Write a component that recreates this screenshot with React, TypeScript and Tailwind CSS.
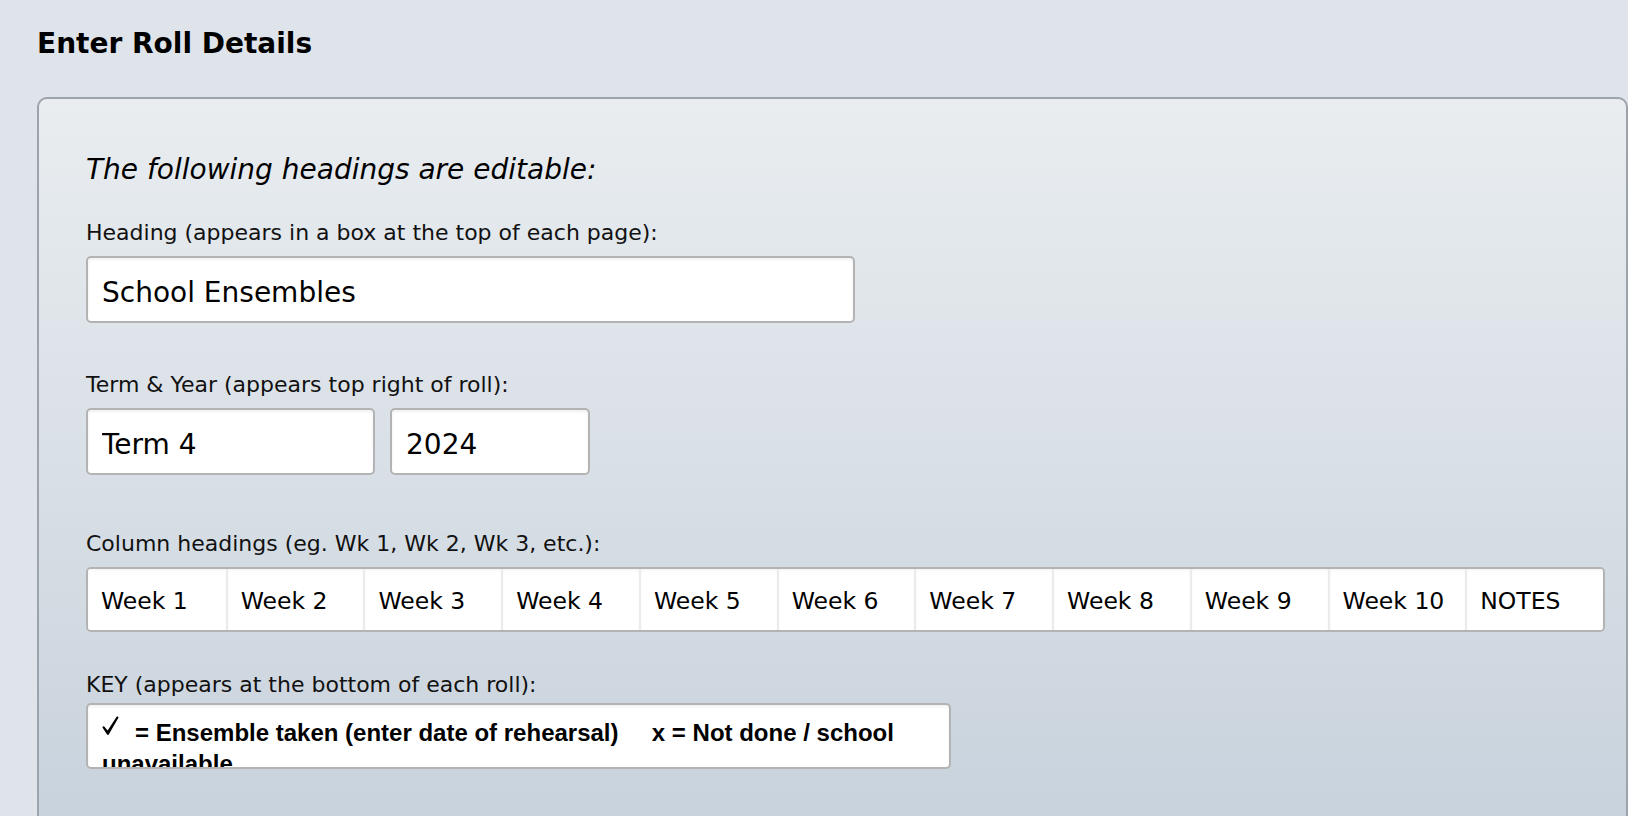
import { useState } from "react";

const weeks = [
  "Week 1",
  "Week 2",
  "Week 3",
  "Week 4",
  "Week 5",
  "Week 6",
  "Week 7",
  "Week 8",
  "Week 9",
  "Week 10",
  "NOTES",
];

const inputClass =
  "h-[67px] rounded-[5px] border-2 border-[#b3b3b3] bg-white px-[14px] pt-[6px] text-[28px] text-black outline-none shadow-[inset_0_2px_3px_rgba(0,0,0,0.06)]";

const labelClass = "text-[22px] leading-[26px] text-[#111]";

// calligraphic tick used in the roll key
const Tick = () => (
  <svg width="17" height="19" viewBox="0 0 17 19" className="inline-block">
    <path d="M0.3 11.2 L1.8 10.1 L5.6 14.6 L15.0 0.3 L16.7 1.2 L6.6 18.8 L5.2 18.8 Z" fill="#000" />
  </svg>
);

const App = () => {
  const [heading, setHeading] = useState("School Ensembles");
  const [term, setTerm] = useState("Term 4");
  const [year, setYear] = useState("2024");
  const [columns, setColumns] = useState(weeks);

  return (
    <div className="h-screen overflow-hidden bg-[#dfe3ea] font-['DejaVu_Sans',Verdana,sans-serif] text-black">
      <h1 className="pl-[37px] pt-[27px] text-[28px] font-bold leading-[34px]">
        Enter Roll Details
      </h1>

      <div className="ml-[37px] mt-[36px] h-[740px] rounded-[10px] border-2 border-[#9da3aa] bg-linear-to-b from-[#e9edf0] to-[#c8d2dc] pl-[47px] pt-[54px]">
        <p className="text-[28px] italic leading-[34px]">
          The following headings are editable:
        </p>

        {/* page heading */}
        <div className={`mt-[33px] ${labelClass}`}>
          Heading (appears in a box at the top of each page):
        </div>
        <input
          className={`mt-[10px] block w-[769px] ${inputClass}`}
          value={heading}
          onChange={(e) => setHeading(e.target.value)}
        />

        {/* term and year */}
        <div className={`mt-[49px] ${labelClass}`}>
          Term &amp; Year (appears top right of roll):
        </div>
        <div className="mt-[10px] flex gap-[15px]">
          <input
            className={`w-[289px] ${inputClass}`}
            value={term}
            onChange={(e) => setTerm(e.target.value)}
          />
          <input
            className={`w-[200px] ${inputClass}`}
            value={year}
            onChange={(e) => setYear(e.target.value)}
          />
        </div>

        {/* column headings */}
        <div className={`mt-[56px] ${labelClass}`}>
          Column headings (eg. Wk 1, Wk 2, Wk 3, etc.):
        </div>
        <div className="mt-[10px] grid h-[65px] w-[1519px] grid-cols-11 overflow-hidden rounded-[5px] border-2 border-[#b3b3b3] bg-white">
          {columns.map((col, i) => (
            <input
              key={i}
              className={`h-full min-w-0 bg-white pl-[13px] pt-[3px] text-[23.5px] text-black outline-none shadow-[inset_0_2px_3px_rgba(0,0,0,0.04)] ${
                i > 0 ? "border-l-2 border-[#ebebeb]" : ""
              }`}
              value={col}
              onChange={(e) =>
                setColumns(columns.map((c, j) => (j === i ? e.target.value : c)))
              }
            />
          ))}
        </div>

        {/* key */}
        <div className={`mt-[40px] ${labelClass}`}>
          KEY (appears at the bottom of each roll):
        </div>
        <div
          contentEditable
          suppressContentEditableWarning
          className="mt-[5px] h-[66px] w-[865px] overflow-hidden rounded-[5px] border-2 border-[#b3b3b3] bg-white pl-[14px] pr-[10px] pt-[11px] font-['Liberation_Sans',Arial,sans-serif] text-[24px] font-bold leading-[31px] outline-none shadow-[inset_0_2px_3px_rgba(0,0,0,0.06)]"
        >
          <span className="mr-[16px] align-[9px] leading-[0]">
            <Tick />
          </span>
          = Ensemble taken (enter date of rehearsal)&nbsp;&nbsp;&nbsp;&nbsp; x = Not done / school unavailable
        </div>
      </div>
    </div>
  );
};

export default App;
